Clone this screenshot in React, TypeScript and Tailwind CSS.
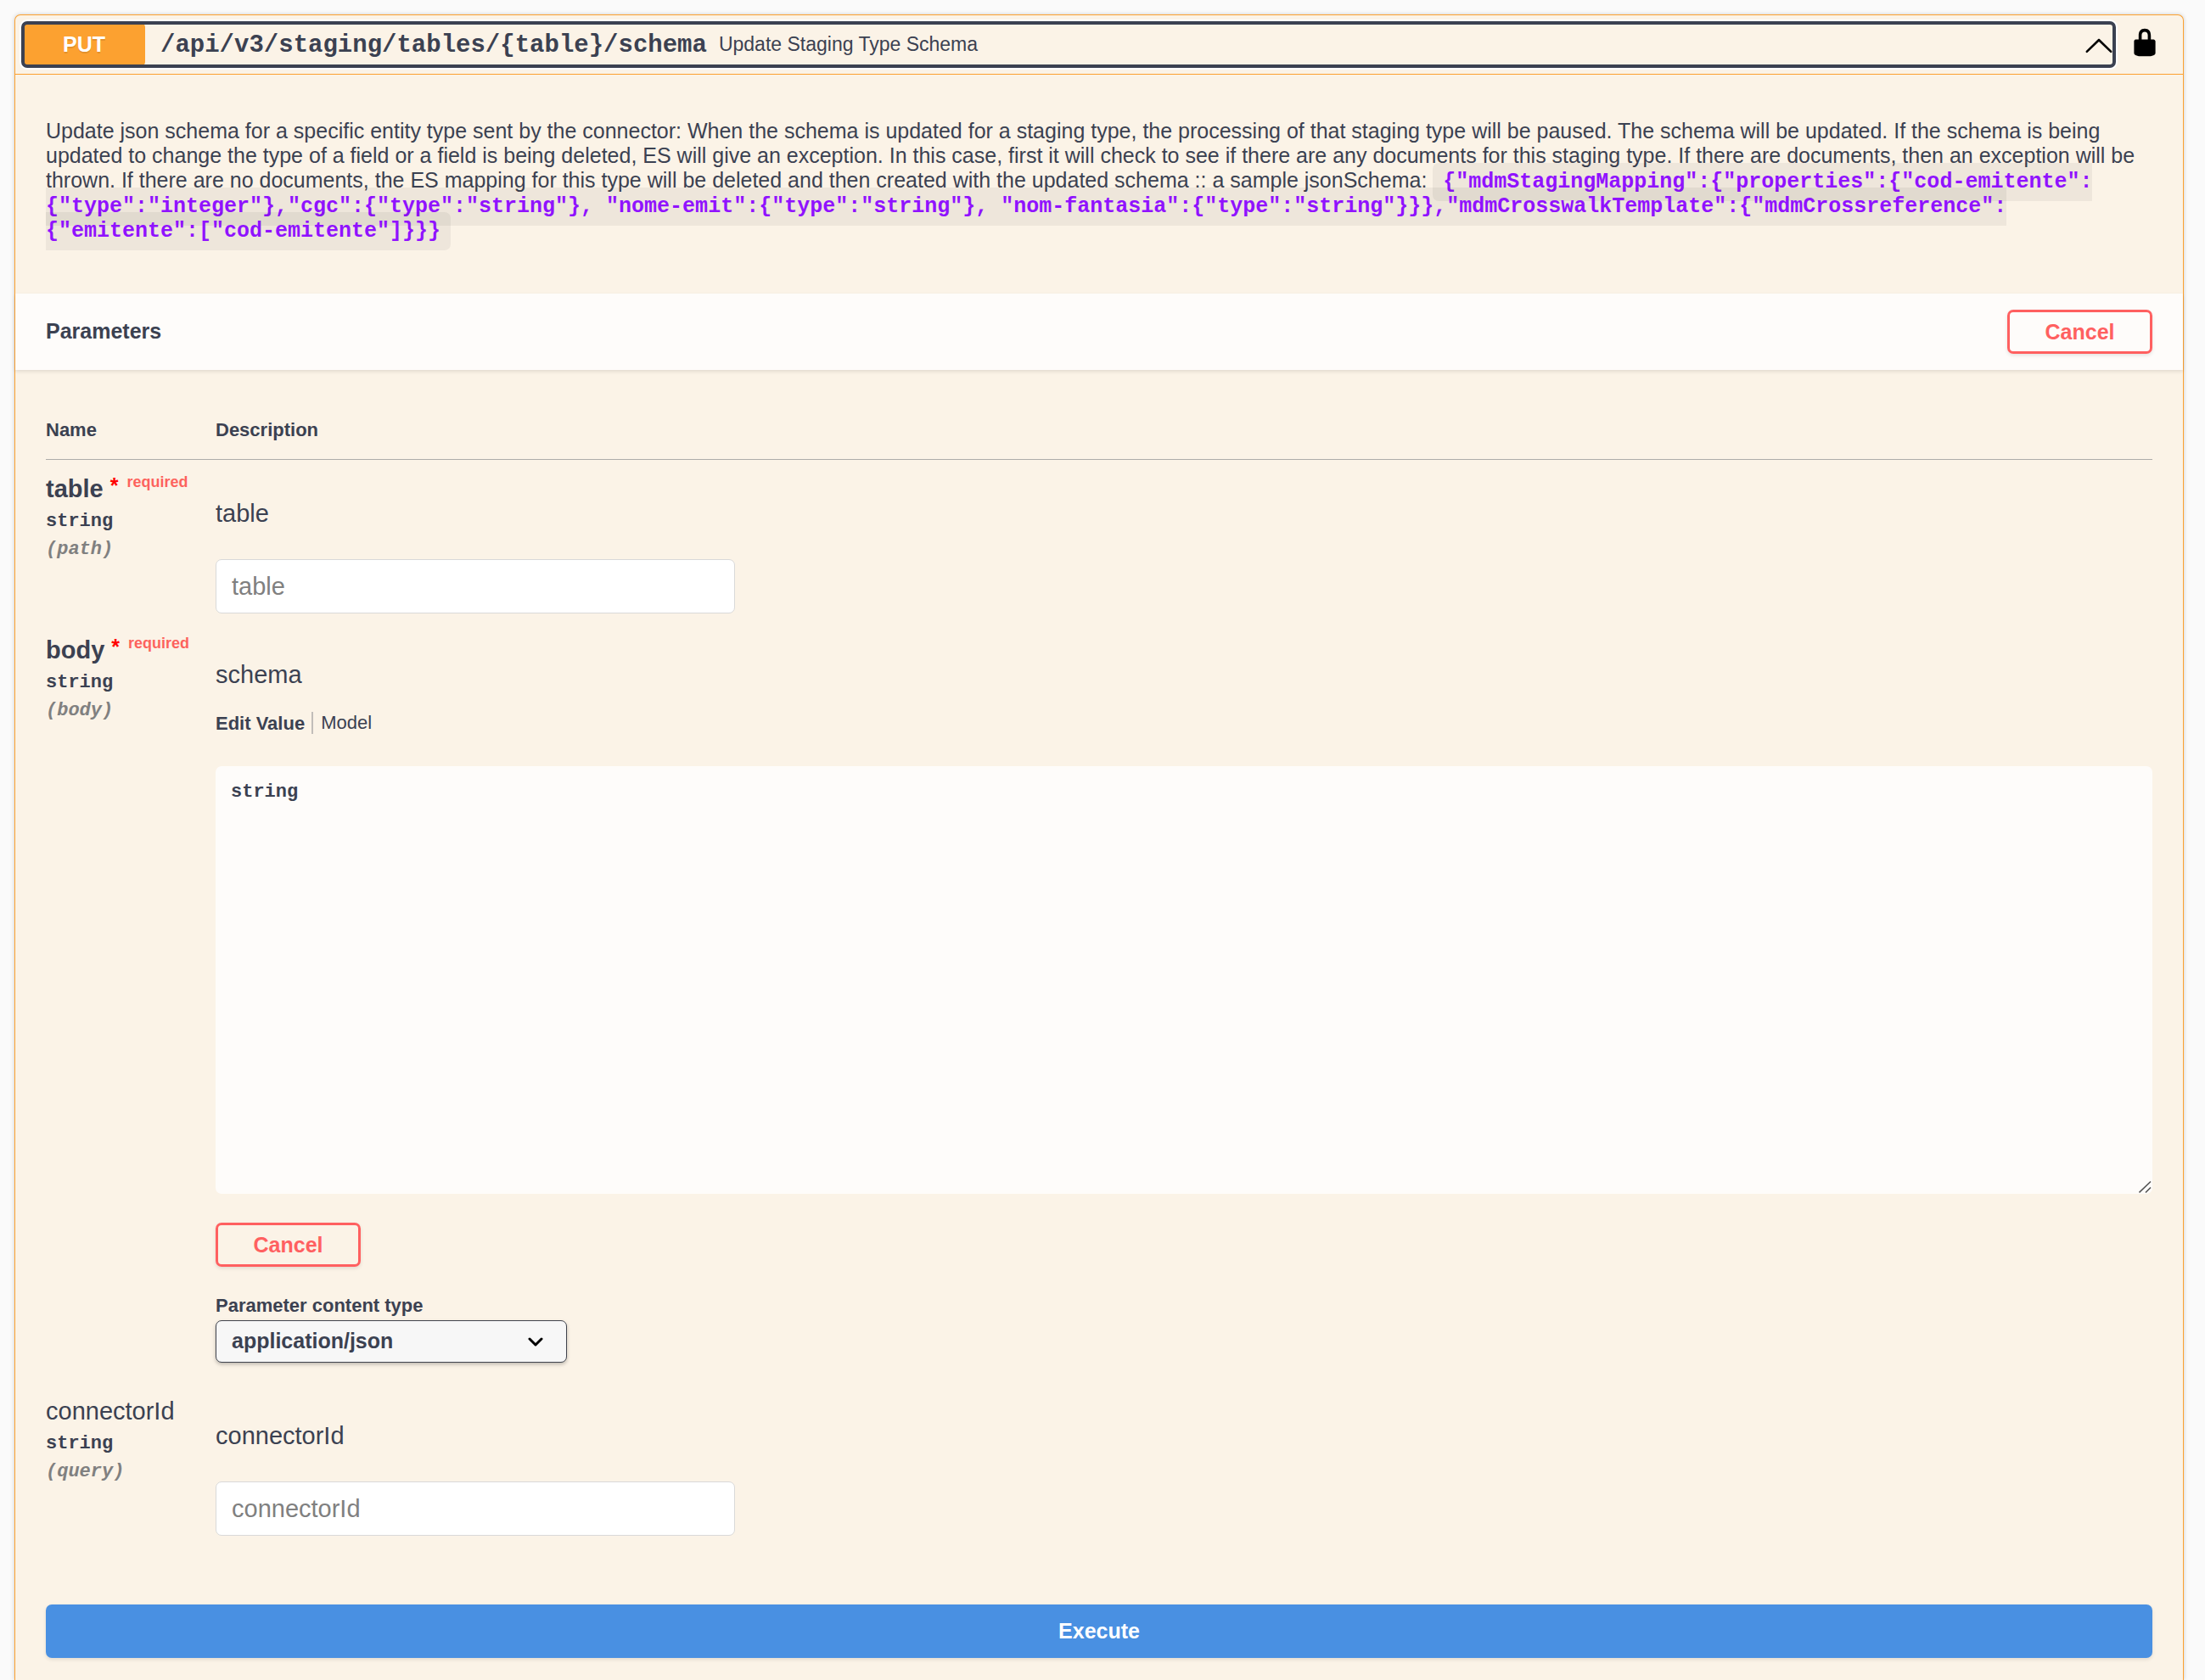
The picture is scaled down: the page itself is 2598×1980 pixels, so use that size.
import type { ReactNode } from 'react'

const DESCRIPTION =
  'Update json schema for a specific entity type sent by the connector: When the schema is updated for a staging type, the processing of that staging type will be paused. The schema will be updated. If the schema is being updated to change the type of a field or a field is being deleted, ES will give an exception. In this case, first it will check to see if there are any documents for this staging type. If there are documents, then an exception will be thrown. If there are no documents, the ES mapping for this type will be deleted and then created with the updated schema :: a sample jsonSchema: '

// Each chunk may wrap before the next one
const SAMPLE = [
  '{"mdmStagingMapping":{"properties":{"cod-emitente":',
  '{"type":"integer"},"cgc":{"type":"string"}, "nome-emit":{"type":"string"}, "nom-fantasia":{"type":"string"}}},"mdmCrosswalkTemplate":{"mdmCrossreference":',
  '{"emitente":["cod-emitente"]}}}',
]

const LockIcon = () => (
  <svg className="size-9" viewBox="0 0 20 20" fill="black" aria-hidden="true">
    <path d="M15.8 8H14V5.6C14 2.703 12.665 1 10 1 7.334 1 6 2.703 6 5.6V8H4c-.553 0-1 .646-1 1.199V17c0 .549.428 1.139.951 1.307l1.197.387C5.672 18.861 6.55 19 7.1 19h5.8c.549 0 1.428-.139 1.951-.307l1.196-.387c.524-.167.953-.757.953-1.306V9.199C17 8.646 16.352 8 15.8 8zM12 8H8V5.199C8 3.754 8.797 3 10 3c1.203 0 2 .754 2 2.199V8z" />
  </svg>
)

const ArrowUpIcon = () => (
  <svg className="ml-auto size-9 shrink-0" viewBox="0 0 20 20" fill="black" aria-hidden="true">
    <path d="M17.418 14.908c.272.268.709.268.979 0 .27-.268.271-.701 0-.969l-7.908-7.83c-.27-.268-.707-.268-.979 0l-7.908 7.83c-.27.268-.27.701 0 .969.271.268.709.267.979 0L10 7.767l7.418 7.141z" />
  </svg>
)

const CancelButton = () => (
  <button
    type="button"
    className="h-[52px] w-[171px] rounded-[7px] border-3 border-[#ff6060] text-[25px] leading-7 font-bold text-[#ff6060] shadow-[0_2px_4px_rgba(0,0,0,0.1)]"
  >
    Cancel
  </button>
)

type ParamRowProps = {
  name: string
  location: string
  description: string
  required?: boolean
  children: ReactNode
}

const ParamRow = ({ name, location, description, required = false, children }: ParamRowProps) => (
  <tr className="align-top">
    <td className="pt-4">
      <div className={required ? 'flex text-[29px] leading-9 font-bold' : 'flex text-[29px] leading-9'}>
        <label htmlFor={`param-${name}`}>{name}</label>
        {required ? (
          <>
            <span className="ml-2 text-[25px] leading-7 text-[#ff0000]">*</span>
            <span className="ml-[10px] text-[18px] leading-5 text-[#ff0000]/60">required</span>
          </>
        ) : null}
      </div>
      <div className="mt-[9px] font-['Liberation_Mono',monospace] text-[22px] leading-6 font-bold">string</div>
      <div className="mt-[9px] font-['Liberation_Mono',monospace] text-[22px] leading-6 font-bold text-[#808080] italic">
        ({location})
      </div>
    </td>
    <td className="pt-[45px] pb-[9px]">
      <p className="text-[29px] leading-9">{description}</p>
      {children}
    </td>
  </tr>
)

const TextParam = ({ name }: { name: string }) => (
  <input
    id={`param-${name}`}
    type="text"
    placeholder={name}
    className="mt-9 block h-16 w-[612px] rounded-[7px] border border-[#d9d9d9] bg-white px-[18px] text-[29px] placeholder:text-[#808080]"
  />
)

const App = () => {
  return (
    <main className="flex min-h-screen flex-col bg-[#fafafa] pt-[17px] pr-[25px] pl-[17px] font-['Liberation_Sans',Arial,sans-serif] text-[#3b4151]">
      <article className="grow rounded-t-[7px] border border-b-0 border-[#fca130] bg-[#fbf3e7] shadow-[0_0_5px_rgba(0,0,0,0.19)]">
        <header className="flex items-center border-b border-[#fca130] py-[9px] pr-[27px] pl-[9px]">
          <button
            type="button"
            aria-expanded="true"
            className="flex h-[51px] grow items-center rounded-[5px] text-left shadow-[0_0_0_4px_white] outline-4 -outline-offset-2 outline-[#3b4151]"
          >
            <span className="flex h-full w-36 items-center justify-center rounded-[5px] bg-[#fca130] text-[25px] font-bold text-white [text-shadow:0_2px_0_rgba(0,0,0,0.1)]">
              PUT
            </span>
            <span className="pt-0.5 pr-[14px] pl-[18px] font-['Liberation_Mono',monospace] text-[29px] font-bold">
              /api/v3/staging/tables/&#123;table&#125;/schema
            </span>
            <span className="text-[23px]">Update Staging Type Schema</span>
            <ArrowUpIcon />
          </button>
          <button type="button" aria-label="authorization button locked" className="ml-[18px] pb-[6px]">
            <LockIcon />
          </button>
        </header>

        <p className="px-9 pt-[52px] pb-[61px] text-[25px] leading-[29px]">
          {DESCRIPTION}
          <code className="rounded-[7px] bg-black/5 px-3 py-2 font-['Liberation_Mono',monospace] leading-5 font-bold text-[#9012fe]">
            {SAMPLE[0]}
            <wbr />
            {SAMPLE[1]}
            <wbr />
            {SAMPLE[2]}
          </code>
        </p>

        <section>
          <div className="flex h-[90px] items-center justify-between bg-[#fefcfa] px-9 shadow-[0_2px_4px_rgba(0,0,0,0.1)]">
            <h4 className="text-[25px] font-bold">Parameters</h4>
            <CancelButton />
          </div>

          <div className="px-9 pt-[53px]">
            <table className="w-full table-fixed">
              <thead>
                <tr className="border-b border-[#3b4151]/40 text-left text-[22px] leading-6">
                  <th className="w-[200px] pt-[6px] pb-[22px]">Name</th>
                  <th className="pt-[6px] pb-[22px]">Description</th>
                </tr>
              </thead>
              <tbody>
                <ParamRow name="table" location="path" description="table" required>
                  <TextParam name="table" />
                </ParamRow>
                <ParamRow name="body" location="body" description="schema" required>
                  <div className="mt-[26px] flex h-[26px] items-center text-[22px]">
                    <button type="button" className="font-bold">
                      Edit Value
                    </button>
                    <button type="button" className="ml-2 border-l-2 border-[#3b4151]/30 pl-[9px] leading-[26px]">
                      Model
                    </button>
                  </div>
                  <div className="relative mt-[38px]">
                    <textarea
                      id="param-body"
                      defaultValue="string"
                      className="block h-[504px] w-full resize-none rounded-[7px] bg-[#fefcfa] p-[18px] font-['Liberation_Mono',monospace] text-[22px] leading-[26px] font-bold"
                    />
                    <svg
                      className="pointer-events-none absolute right-0 bottom-0 size-4"
                      viewBox="0 0 16 16"
                      stroke="#555"
                      strokeWidth="1.6"
                      aria-hidden="true"
                    >
                      <path d="M.5 14.5l13.5-13M8 14.5l6-6" />
                    </svg>
                  </div>
                  <div className="mt-[34px]">
                    <CancelButton />
                  </div>
                  <label htmlFor="content-type" className="mt-[34px] block text-[22px] leading-6 font-bold">
                    Parameter content type
                  </label>
                  <div className="relative mt-[5px] mb-[14px] w-[414px]">
                    <select
                      id="content-type"
                      className="block h-[50px] w-full appearance-none rounded-[7px] border border-[#41444e] bg-[#f7f7f7] pr-[70px] pl-[18px] text-[25px] font-bold shadow-[0_2px_4px_rgba(0,0,0,0.25)]"
                    >
                      <option>application/json</option>
                    </select>
                    <svg
                      className="pointer-events-none absolute top-5 right-7 h-[11px] w-[18px]"
                      viewBox="0 0 18 11"
                      fill="none"
                      stroke="black"
                      strokeWidth="3"
                      strokeLinecap="round"
                      strokeLinejoin="round"
                      aria-hidden="true"
                    >
                      <path d="M2 2l7 7 7-7" />
                    </svg>
                  </div>
                </ParamRow>
                <ParamRow name="connectorId" location="query" description="connectorId">
                  <TextParam name="connectorId" />
                </ParamRow>
              </tbody>
            </table>
          </div>

          <div className="px-9 pt-[72px]">
            <button
              type="button"
              className="h-[63px] w-full rounded-[7px] bg-[#4990e2] text-[25px] font-bold text-white shadow-[0_2px_4px_rgba(0,0,0,0.1)]"
            >
              Execute
            </button>
          </div>
        </section>
      </article>
    </main>
  )
}

export default App
